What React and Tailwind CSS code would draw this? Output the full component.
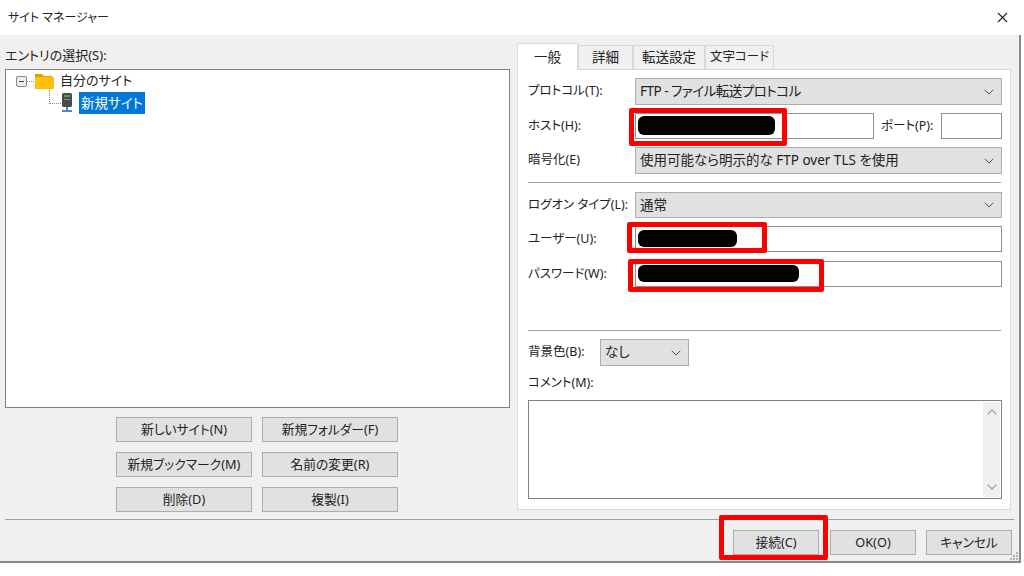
import React from "react";
import { ChevronDown, ChevronUp, X } from "lucide-react";

function Select({ children, className = "" }) {
    return (
        <div className={`flex items-center justify-between border border-[#adadad] bg-[#e1e1e1] pl-[4px] pr-[4px] text-[13.5px] text-[#222] ${className}`}>
            <span className="whitespace-nowrap">{children}</span>
            <ChevronDown className="h-4 w-4 text-[#555]" strokeWidth={1.5} />
        </div>
    );
}

// 赤枠と黒塗りは入力欄の上に重ねる
function Redacted({ box, pill }) {
    return (
        <>
            <div className={`absolute rounded-[2px] border-[5px] border-[#ff0000] ${box}`} />
            <div className={`absolute rounded-[6px] bg-black ${pill}`} />
        </>
    );
}

function Btn({ children }) {
    return (
        <div className="flex h-[25px] items-center justify-center whitespace-nowrap border border-[#adadad] bg-[#e1e1e1] text-[12.75px] text-[#222]">
            {children}
        </div>
    );
}

function Tab({ children, className = "" }) {
    return (
        <div className={`flex h-[24px] items-center justify-center self-end whitespace-nowrap border border-b-0 border-[#d9d9d9] bg-[#f0f0f0] text-[#222] ${className}`}>
            {children}
        </div>
    );
}

function Label({ children, className = "w-[107px]" }) {
    return <span className={`shrink-0 whitespace-nowrap text-[12.5px] ${className}`}>{children}</span>;
}

function ServerIcon() {
    return (
        <svg width="12" height="20" viewBox="0 0 12 20" className="shrink-0">
            <rect x="1" y="0" width="10" height="14" rx="1.5" fill="#4a4a4a" />
            <rect x="3" y="2" width="6" height="2" fill="#3fae49" />
            <rect x="3" y="6" width="6" height="1" fill="#8a8a8a" />
            <rect x="5" y="14" width="2" height="3" fill="#6a7f95" />
            <rect x="1" y="17" width="10" height="2" fill="#3d8fd1" />
        </svg>
    );
}

function FolderIcon() {
    return (
        <svg width="20" height="18" viewBox="0 0 20 18" className="shrink-0">
            <path d="M1 2h7l2 2h8v3H1z" fill="#dca100" />
            <path d="M1 5h18a1 1 0 0 1 1 1v11H1z" fill="#ffc107" />
        </svg>
    );
}

export default function App() {
    return (
        <div className="h-[576px] w-[1024px] overflow-hidden bg-white font-['Noto_Sans','Noto_Sans_CJK_JP',sans-serif] text-[#222] [font-feature-settings:'palt']">
            <div className="flex h-[35px] w-[1021px] items-center justify-between pl-[8px] pr-[10px] text-[12px]">
                <span>サイト マネージャー</span>
                <X className="h-[17px] w-[17px] text-[#222]" strokeWidth={1.5} />
            </div>

            <div className="relative h-[528px] w-[1021px] border-r-2 border-b-2 border-[#8a8a8a] bg-[#f0f0f0]">
                <div className="flex h-[484px] pl-[5px] pt-[8px]">
                    <div className="w-[505px]">
                        <div className="flex h-[26px] items-center text-[13px]">エントリの選択(S):</div>
                        <div className="relative h-[339px] border border-[#828282] bg-white text-[13px]">
                            <div className="flex h-[22px] items-center pl-[10px]">
                                <div className="flex h-[11px] w-[11px] items-center justify-center rounded-[2px] border border-[#8a8a8a] bg-[#eee]">
                                    <div className="h-px w-[5px] bg-[#444]" />
                                </div>
                                <div className="w-[7px] border-t border-dotted border-[#888]" />
                                <FolderIcon />
                                <span className="ml-[6px]">自分のサイト</span>
                            </div>
                            <div className="-mt-px flex h-[23px] items-center pl-[38px]">
                                <div className="ml-[5px] mb-[12px] h-[14px] w-[12px] border-b border-l border-dotted border-[#888]" />
                                <ServerIcon />
                                <span className="ml-[6px] w-[66px] bg-[#0078d7] py-[2px] text-center text-[13.5px] leading-[18px] text-white">新規サイト</span>
                            </div>
                        </div>
                        <div className="ml-[111px] mt-[9px] grid w-[282px] grid-cols-2 gap-x-[10px] gap-y-[10px]">
                            <Btn>新しいサイト(N)</Btn>
                            <Btn>新規フォルダー(F)</Btn>
                            <Btn>新規ブックマーク(M)</Btn>
                            <Btn>名前の変更(R)</Btn>
                            <Btn>削除(D)</Btn>
                            <Btn>複製(I)</Btn>
                        </div>
                    </div>

                    <div className="ml-[7px] w-[494px]">
                        <div className="flex h-[26px]">
                            <div className="z-10 -mb-px flex h-[27px] w-[61px] items-center justify-center border border-b-0 border-[#d9d9d9] bg-white text-[13.5px]">一般</div>
                            <Tab className="w-[55px] text-[13.5px]">詳細</Tab>
                            <Tab className="w-[72px] text-[13.5px]">転送設定</Tab>
                            <Tab className="w-[69px] text-[12.5px]">文字コード</Tab>
                        </div>
                        <div className="h-[441px] border border-[#d9d9d9] bg-white pl-[10px] pr-[8px] pt-[8px] text-[13.5px]">
                            <div className="flex items-center">
                                <Label>プロトコル(T):</Label>
                                <Select className="h-[27px] w-[367px]"><span className="tracking-[-0.5px]">FTP - ファイル転送プロトコル</span></Select>
                            </div>
                            <div className="mt-[8px] flex items-center">
                                <Label>ホスト(H):</Label>
                                <div className="relative h-[26px] w-[239px] border border-[#8f8f8f] bg-white">
                                    <Redacted box="-left-[7px] -top-[6px] h-[38px] w-[158px]" pill="left-[2px] top-[2px] h-[19px] w-[137px]" />
                                </div>
                                <Label className="ml-[7px] w-[60px]">ポート(P):</Label>
                                <div className="h-[26px] w-[61px] border border-[#8f8f8f] bg-white" />
                            </div>
                            <div className="mt-[8px] flex items-center">
                                <Label>暗号化(E)</Label>
                                <Select className="h-[27px] w-[367px]">使用可能なら明示的な FTP over TLS を使用</Select>
                            </div>
                            <div className="mt-[8px] h-px w-[473px] bg-[#a0a0a0]" />
                            <div className="mt-[9px] flex items-center">
                                <Label>ログオン タイプ(L):</Label>
                                <Select className="h-[26px] w-[367px]">通常</Select>
                            </div>
                            <div className="mt-[8px] flex items-center">
                                <Label>ユーザー(U):</Label>
                                <div className="relative h-[26px] w-[367px] border border-[#8f8f8f] bg-white">
                                    <Redacted box="-left-[9px] -top-[5px] h-[31px] w-[140px]" pill="left-[2px] top-[3px] h-[17px] w-[99px]" />
                                </div>
                            </div>
                            <div className="mt-[9px] flex items-center">
                                <Label>パスワード(W):</Label>
                                <div className="relative h-[26px] w-[367px] border border-[#8f8f8f] bg-white">
                                    <Redacted box="-left-[8px] -top-[3px] h-[33px] w-[196px]" pill="left-[2px] top-[3px] h-[17px] w-[161px]" />
                                </div>
                            </div>
                            <div className="mt-[43px] h-px w-[473px] bg-[#a0a0a0]" />
                            <div className="mt-[8px] flex items-center">
                                <Label className="w-[72px]">背景色(B):</Label>
                                <Select className="h-[27px] w-[89px]">なし</Select>
                            </div>
                            <div className="mt-[9px] flex h-[17px] items-center text-[12.5px]">コメント(M):</div>
                            <div className="mt-[8px] flex h-[99px] w-[474px] justify-end border border-[#828282] bg-white p-px">
                                <div className="flex h-full w-[17px] flex-col items-center justify-between bg-[#f0f0f0] py-[2px] text-[#a6a6a6]">
                                    <ChevronUp className="h-4 w-4" strokeWidth={2} />
                                    <ChevronDown className="h-4 w-4" strokeWidth={2} />
                                </div>
                            </div>
                        </div>
                    </div>
                </div>

                <div className="ml-[5px] h-px w-[1009px] bg-[#a0a0a0]" />

                <div className="mt-[10px] flex justify-end gap-[10px] pr-[7px]">
                    <div className="relative w-[86px]">
                        <Btn>接続(C)</Btn>
                        <div className="absolute -left-[14px] -top-[15px] h-[45px] w-[109px] rounded-[2px] border-[5px] border-[#ff0000]" />
                    </div>
                    <div className="ml-px w-[86px]"><Btn>OK(O)</Btn></div>
                    <div className="w-[86px]"><Btn>キャンセル</Btn></div>
                </div>

                <svg width="10" height="10" viewBox="0 0 10 10" className="absolute bottom-0 right-0">
                    <g fill="#b5b5b5">
                        <rect x="7" y="1" width="2" height="2" />
                        <rect x="4" y="4" width="2" height="2" />
                        <rect x="7" y="4" width="2" height="2" />
                        <rect x="1" y="7" width="2" height="2" />
                        <rect x="4" y="7" width="2" height="2" />
                        <rect x="7" y="7" width="2" height="2" />
                    </g>
                </svg>
            </div>
        </div>
    );
}
